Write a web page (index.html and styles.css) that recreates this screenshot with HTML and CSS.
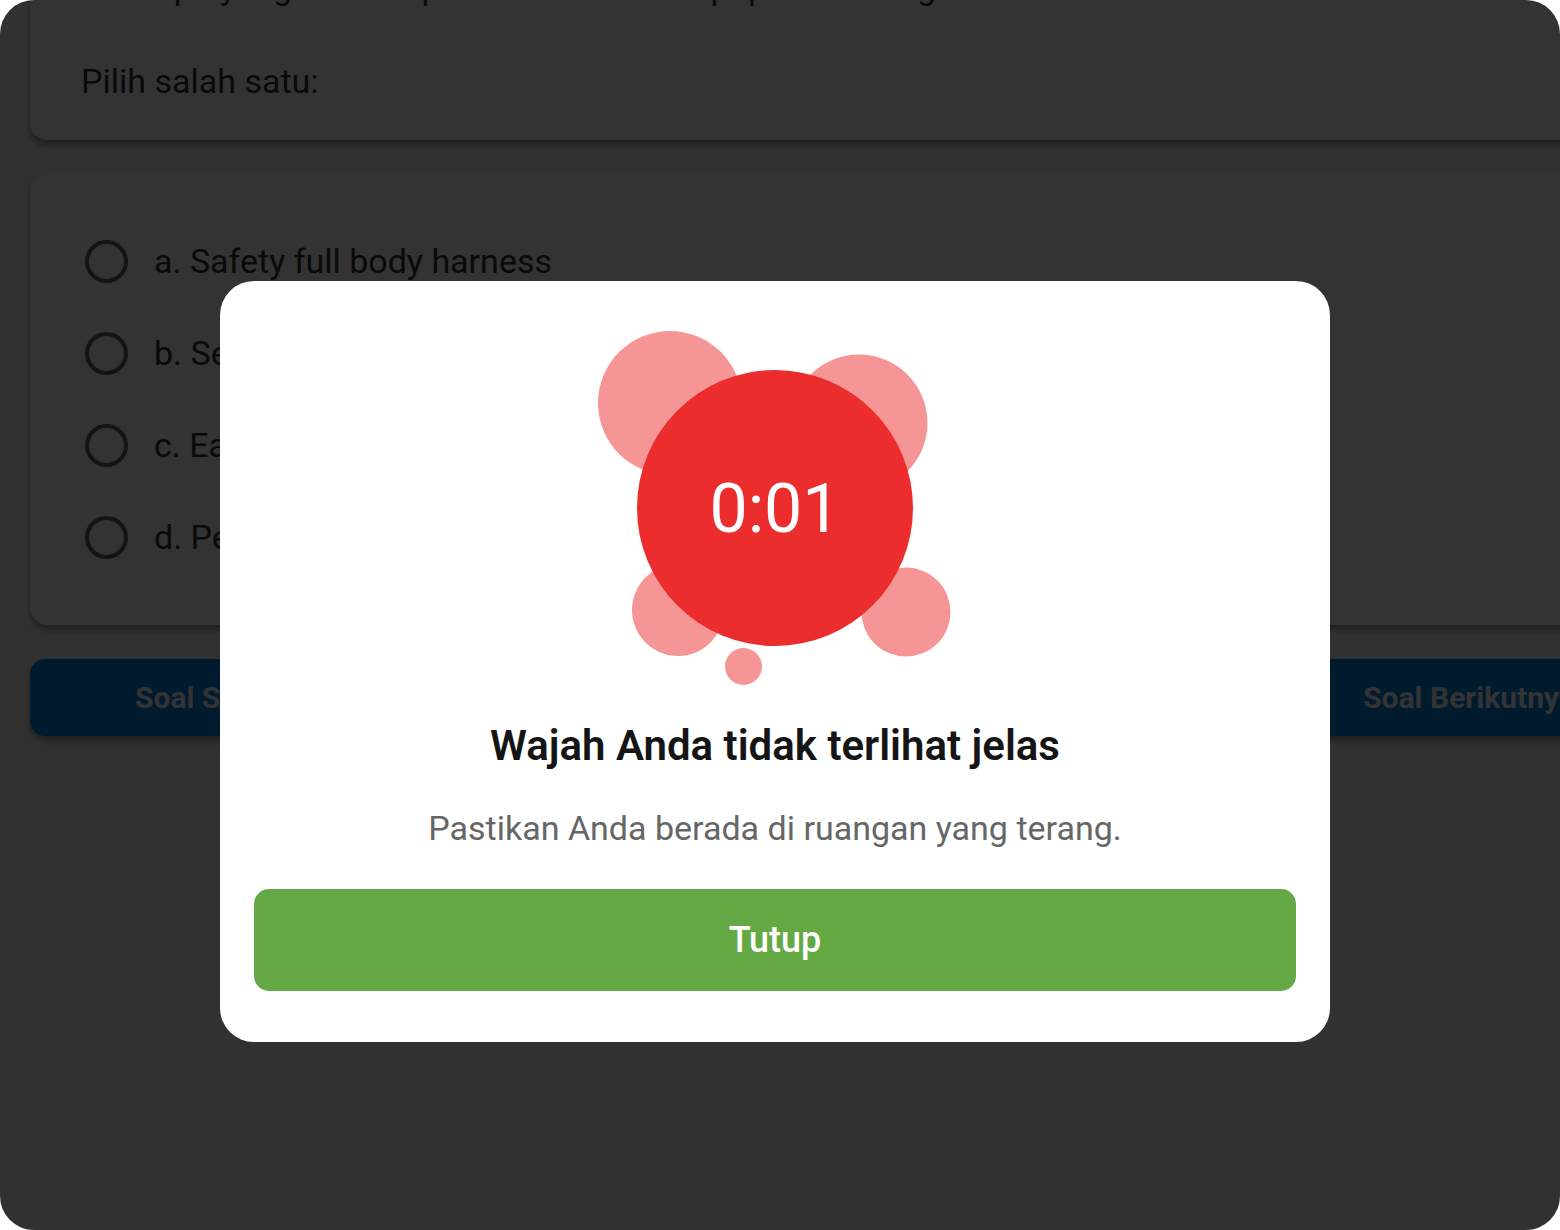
FILE: index.html
```html
<!DOCTYPE html>
<html lang="id">
<head>
    <meta charset="UTF-8">
    <meta name="viewport" content="width=device-width, initial-scale=1.0">
    <title>Ujian</title>
    <link rel="stylesheet" href="styles.css">
</head>
<body>
    <div class="screen">
        <main class="quiz">
            <section class="card question">
                <p>APD apa yang harus dipakai ketika ada di papan bentang</p>
                <p>Pilih salah satu:</p>
            </section>

            <form class="card answers">
                <label class="answer"><input type="radio" name="answer" value="a"> a. Safety full body harness</label>
                <label class="answer"><input type="radio" name="answer" value="b"> b. Sepatu safety</label>
                <label class="answer"><input type="radio" name="answer" value="c"> c. Ear plug</label>
                <label class="answer"><input type="radio" name="answer" value="d"> d. Pelampung</label>
            </form>

            <nav class="quiz-nav">
                <button class="nav-button" type="button">Soal Sebelumnya</button>
                <button class="nav-button" type="button">Soal Berikutnya</button>
            </nav>
        </main>

        <div class="overlay">
            <div class="dialog" role="dialog" aria-modal="true" aria-labelledby="dialogTitle">
                <svg class="timer" width="354" height="356" viewBox="0 0 354 356">
                    <g class="timer-bubbles">
                        <circle cx="72" cy="72" r="72"/>
                        <circle cx="261" cy="92" r="68.5"/>
                        <circle cx="80" cy="279" r="46"/>
                        <circle cx="308" cy="281" r="44.5"/>
                        <circle cx="145.5" cy="335.5" r="18.5"/>
                    </g>
                    <circle class="timer-face" cx="177" cy="177" r="138"/>
                    <text class="timer-text" x="177" y="201" text-anchor="middle">0:01</text>
                </svg>
                <h1 class="dialog-title" id="dialogTitle">Wajah Anda tidak terlihat jelas</h1>
                <p class="dialog-text">Pastikan Anda berada di ruangan yang terang.</p>
                <button class="close-button" type="button">Tutup</button>
            </div>
        </div>
    </div>
</body>
</html>
```
FILE: styles.css
```css
* {
    box-sizing: border-box;
}
body {
    margin: 0;
    background-color: white;
    font-family: Roboto, sans-serif;
    font-size: 34px;
    color: #333;
}
p {
    margin: 0;
}
button {
    border: none;
    font-family: inherit;
    cursor: pointer;
}
.screen {
    position: relative;
    min-height: 100vh;
    overflow: hidden;
    border-radius: 34px;
    background-color: #f5f5f5;
}
/* the quiz runs past the right and top edges of the screen */
.quiz {
    display: flex;
    flex-direction: column;
    gap: 34px;
    margin: -36px -120px 0 30px;
}
.card {
    background-color: white;
    border-radius: 17px;
    box-shadow: 0 5px 6px rgba(0, 0, 0, 0.35);
}
.question {
    display: flex;
    flex-direction: column;
    gap: 47px;
    padding: 0 51px 35px;
    line-height: 47px;
}
.answers {
    display: flex;
    flex-direction: column;
    padding: 41px 55px 42px;
}
.answer {
    display: flex;
    align-items: center;
    gap: 26px;
    height: 92px;
}
.answer input {
    appearance: none;
    width: 43px;
    height: 43px;
    margin: 0;
    border: 4px solid #666;
    border-radius: 50%;
}
.quiz-nav {
    display: flex;
    justify-content: space-between;
}
.nav-button {
    height: 77px;
    padding: 0 105px;
    border-radius: 15px;
    background-color: #0082e6;
    box-shadow: 0 5px 6px rgba(0, 0, 0, 0.35);
    color: white;
    font-size: 30px;
    font-weight: 700;
}
.overlay {
    position: absolute;
    inset: 0;
    display: flex;
    align-items: center;
    padding: 92px 230px 0 220px;
    background-color: rgba(0, 0, 0, 0.8);
}
.dialog {
    flex: 1;
    display: flex;
    flex-direction: column;
    align-items: center;
    padding: 50px 34px 51px;
    border-radius: 34px;
    background-color: white;
    text-align: center;
}
.timer-bubbles {
    fill: #f59595;
}
.timer-face {
    fill: #eb2d2e;
}
.timer-text {
    fill: white;
    font-size: 68px;
}
.dialog-title {
    margin: 33px 0;
    color: #151515;
    font-size: 42px;
    font-weight: 600;
    line-height: 52px;
}
.dialog-text {
    margin-bottom: 38px;
    color: #666;
    line-height: 46px;
}
.close-button {
    width: 100%;
    height: 102px;
    border-radius: 15px;
    background-color: #64a944;
    color: white;
    font-size: 36px;
    font-weight: 500;
}
```
